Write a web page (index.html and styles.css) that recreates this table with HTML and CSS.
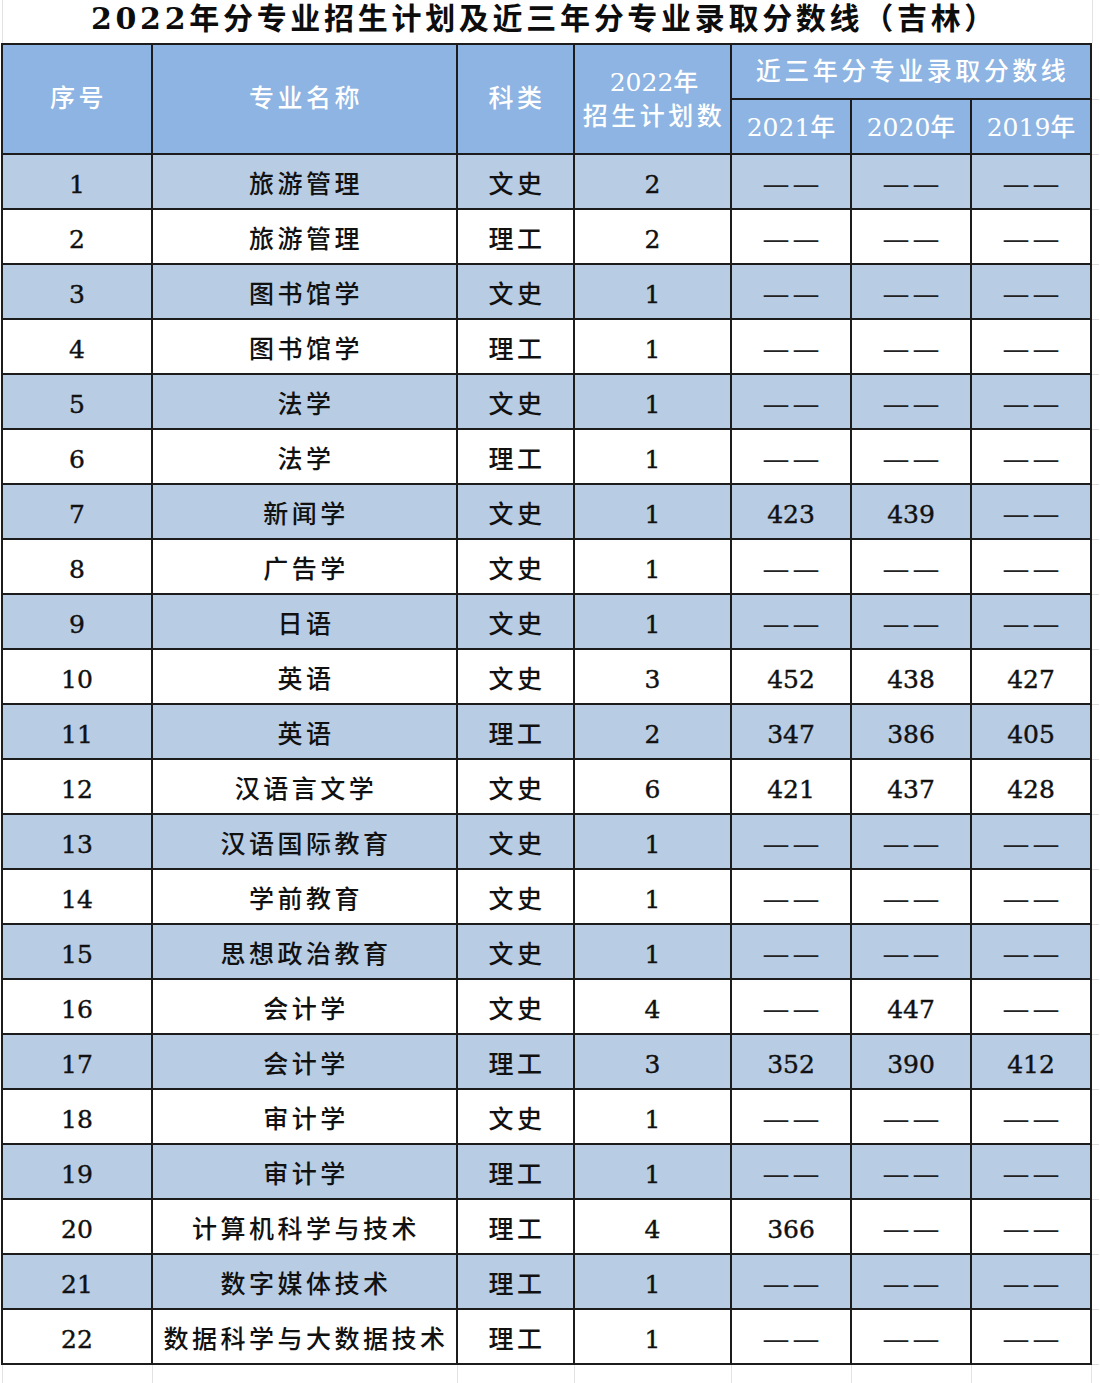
FILE: index.html
```html
<!DOCTYPE html>
<html lang="zh-CN">
<head>
<meta charset="utf-8">
<title>2022年分专业招生计划及近三年分专业录取分数线（吉林）</title>
<link rel="stylesheet" href="styles.css">
</head>
<body>
<div class="title">2022年分专业招生计划及近三年分专业录取分数线（吉林）</div>
<table class="plan">
  <colgroup>
    <col class="c-no"><col class="c-name"><col class="c-type"><col class="c-plan">
    <col class="c-year"><col class="c-year"><col class="c-year"><col class="c-gap">
  </colgroup>
  <thead>
    <tr class="h1">
      <th rowspan="2">序号</th>
      <th rowspan="2">专业名称</th>
      <th rowspan="2">科类</th>
      <th rowspan="2" class="two"><span class="yr">2022年</span><br>招生计划数</th>
      <th colspan="3">近三年分专业录取分数线</th>
      <td class="gap"></td>
    </tr>
    <tr class="h2">
      <th class="yr">2021年</th>
      <th class="yr">2020年</th>
      <th class="yr">2019年</th>
      <td class="gap"></td>
    </tr>
  </thead>
  <tbody>
    <tr class="odd"><td class="num">1</td><td>旅游管理</td><td>文史</td><td class="num">2</td><td class="dash">——</td><td class="dash">——</td><td class="dash">——</td><td class="gap"></td></tr>
    <tr><td class="num">2</td><td>旅游管理</td><td>理工</td><td class="num">2</td><td class="dash">——</td><td class="dash">——</td><td class="dash">——</td><td class="gap"></td></tr>
    <tr class="odd"><td class="num">3</td><td>图书馆学</td><td>文史</td><td class="num">1</td><td class="dash">——</td><td class="dash">——</td><td class="dash">——</td><td class="gap"></td></tr>
    <tr><td class="num">4</td><td>图书馆学</td><td>理工</td><td class="num">1</td><td class="dash">——</td><td class="dash">——</td><td class="dash">——</td><td class="gap"></td></tr>
    <tr class="odd"><td class="num">5</td><td>法学</td><td>文史</td><td class="num">1</td><td class="dash">——</td><td class="dash">——</td><td class="dash">——</td><td class="gap"></td></tr>
    <tr><td class="num">6</td><td>法学</td><td>理工</td><td class="num">1</td><td class="dash">——</td><td class="dash">——</td><td class="dash">——</td><td class="gap"></td></tr>
    <tr class="odd"><td class="num">7</td><td>新闻学</td><td>文史</td><td class="num">1</td><td class="num">423</td><td class="num">439</td><td class="dash">——</td><td class="gap"></td></tr>
    <tr><td class="num">8</td><td>广告学</td><td>文史</td><td class="num">1</td><td class="dash">——</td><td class="dash">——</td><td class="dash">——</td><td class="gap"></td></tr>
    <tr class="odd"><td class="num">9</td><td>日语</td><td>文史</td><td class="num">1</td><td class="dash">——</td><td class="dash">——</td><td class="dash">——</td><td class="gap"></td></tr>
    <tr><td class="num">10</td><td>英语</td><td>文史</td><td class="num">3</td><td class="num">452</td><td class="num">438</td><td class="num">427</td><td class="gap"></td></tr>
    <tr class="odd"><td class="num">11</td><td>英语</td><td>理工</td><td class="num">2</td><td class="num">347</td><td class="num">386</td><td class="num">405</td><td class="gap"></td></tr>
    <tr><td class="num">12</td><td>汉语言文学</td><td>文史</td><td class="num">6</td><td class="num">421</td><td class="num">437</td><td class="num">428</td><td class="gap"></td></tr>
    <tr class="odd"><td class="num">13</td><td>汉语国际教育</td><td>文史</td><td class="num">1</td><td class="dash">——</td><td class="dash">——</td><td class="dash">——</td><td class="gap"></td></tr>
    <tr><td class="num">14</td><td>学前教育</td><td>文史</td><td class="num">1</td><td class="dash">——</td><td class="dash">——</td><td class="dash">——</td><td class="gap"></td></tr>
    <tr class="odd"><td class="num">15</td><td>思想政治教育</td><td>文史</td><td class="num">1</td><td class="dash">——</td><td class="dash">——</td><td class="dash">——</td><td class="gap"></td></tr>
    <tr><td class="num">16</td><td>会计学</td><td>文史</td><td class="num">4</td><td class="dash">——</td><td class="num">447</td><td class="dash">——</td><td class="gap"></td></tr>
    <tr class="odd"><td class="num">17</td><td>会计学</td><td>理工</td><td class="num">3</td><td class="num">352</td><td class="num">390</td><td class="num">412</td><td class="gap"></td></tr>
    <tr><td class="num">18</td><td>审计学</td><td>文史</td><td class="num">1</td><td class="dash">——</td><td class="dash">——</td><td class="dash">——</td><td class="gap"></td></tr>
    <tr class="odd"><td class="num">19</td><td>审计学</td><td>理工</td><td class="num">1</td><td class="dash">——</td><td class="dash">——</td><td class="dash">——</td><td class="gap"></td></tr>
    <tr><td class="num">20</td><td>计算机科学与技术</td><td>理工</td><td class="num">4</td><td class="num">366</td><td class="dash">——</td><td class="dash">——</td><td class="gap"></td></tr>
    <tr class="odd"><td class="num">21</td><td>数字媒体技术</td><td>理工</td><td class="num">1</td><td class="dash">——</td><td class="dash">——</td><td class="dash">——</td><td class="gap"></td></tr>
    <tr><td class="num">22</td><td>数据科学与大数据技术</td><td>理工</td><td class="num">1</td><td class="dash">——</td><td class="dash">——</td><td class="dash">——</td><td class="gap"></td></tr>
  </tbody>
  <tfoot>
    <tr class="tail"><td></td><td></td><td></td><td></td><td></td><td></td><td></td><td class="gap"></td></tr>
  </tfoot>
</table>
</body>
</html>
```

FILE: styles.css
```css
html, body {
  margin: 0;
  padding: 0;
  background: #ffffff;
}

body {
  font-family: "DejaVu Serif", "Noto Sans CJK SC", serif;
  color: #111111;
  width: 1100px;
  height: 1383px;
  overflow: hidden;
}

.title {
  box-sizing: border-box;
  width: 1091px;
  height: 43px;
  margin-left: 2px;
  border-left: 1px solid #e2e2e2;
  border-right: 1px solid #e2e2e2;
  font-size: 30px;
  font-weight: 600;
  letter-spacing: 3.7px;
  line-height: 38px;
  text-align: center;
  padding-right: 6px;
  color: #0d0d0d;
}

.plan {
  border-collapse: collapse;
  table-layout: fixed;
  width: 1098px;
  margin-left: 1px;
}

.c-no { width: 150px; }
.c-name { width: 305px; }
.c-type { width: 117px; }
.c-plan { width: 157px; }
.c-year { width: 120px; }
.c-gap { width: 8px; }

.plan th,
.plan td {
  border: 2px solid #1c1c1c;
  padding: 6px 0 0 3px;
  text-align: center;
  vertical-align: middle;
  font-size: 25px;
  font-weight: 500;
  letter-spacing: 3.5px;
  line-height: 30px;
  white-space: nowrap;
}

.plan thead th {
  background: #8db4e2;
  color: #ffffff;
  font-weight: 500;
  padding-top: 0;
}

.plan .h1 th,
.plan .h2 th {
  height: 53px;
}

.plan th.yr,
.plan .yr {
  letter-spacing: 0;
}

.plan th.yr {
  padding-left: 0;
  padding-top: 2px;
  height: 51px;
}

.plan th.two {
  line-height: 34px;
  padding-top: 2px;
}

.plan tbody td {
  height: 47px;
}

.plan tbody tr.odd td {
  background: #b8cce4;
}

.plan td.num {
  font-size: 25px;
  font-weight: 400;
  letter-spacing: 0;
  padding-left: 0;
  color: #111111;
  -webkit-text-stroke: 0.4px #111111;
}

.plan td.dash {
  font-size: 27px;
  letter-spacing: 3px;
  padding-left: 3px;
  color: #222222;
}

.plan .gap,
.plan tbody tr.odd td.gap {
  border: none;
  border-bottom: 1px solid #dddddd;
  background: #ffffff;
  padding: 0;
}

.plan .tail td {
  height: 19px;
  padding: 0;
  border: none;
  border-left: 1px solid #e2e2e2;
  border-right: 1px solid #e2e2e2;
}

.plan .tail td.gap {
  border: none;
}
```
